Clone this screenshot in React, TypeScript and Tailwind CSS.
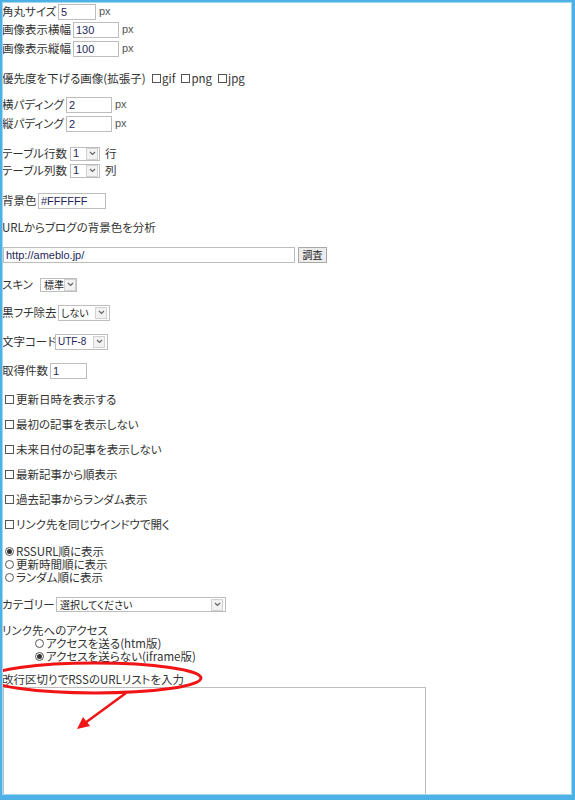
import React from "react";

const Box = () => (
  <span className="inline-block w-[9px] h-[9px] border border-[#555] bg-white shrink-0" />
);

const Radio = ({ checked = false }: { checked?: boolean }) => (
  <span className="inline-flex items-center justify-center w-[9px] h-[9px] rounded-full border border-[#555] bg-white shrink-0">
    {checked ? <span className="block w-[5px] h-[5px] rounded-full bg-[#333]" /> : null}
  </span>
);

const Chevron = () => (
  <span className="flex items-center justify-center w-[12px] h-[12px] border border-[#d2d2d2] bg-[#f2f2f2] shrink-0">
    <svg width="7" height="5" viewBox="0 0 7 5">
      <polyline points="1,1 3.5,3.5 6,1" fill="none" stroke="#666" strokeWidth="1.2" />
    </svg>
  </span>
);

const Row = ({ h, mt, children }: { h: string; mt?: string; children: React.ReactNode }) => (
  <div className={`flex items-center whitespace-nowrap ${h} ${mt ?? ""}`}>{children}</div>
);

const inputCls =
  "box-border h-[16px] border border-[#bdbdbd] bg-white px-[2px] text-[11px] leading-none text-[#1f1f5a] font-['Liberation_Sans',sans-serif] outline-none";

const Px = () => <span className="ml-[3px] text-[11px] text-[#555] font-['Liberation_Sans',sans-serif]">px</span>;

export default function App() {
  return (
    <div className="w-[575px] h-[800px] bg-[#4db1e5] pt-[2px] pl-[2px] pr-[3px] pb-[5px] box-border">
      <div className="relative w-full h-full border border-[#a3d7f2] bg-white overflow-hidden">
        <div className="ml-[-1px] text-[11.5px] leading-none text-[#333] font-['Noto_Sans_CJK_JP',sans-serif] [font-feature-settings:'palt']">
          <Row h="h-[17px]">
            <span className="w-[56px] shrink-0">角丸サイズ</span>
            <input readOnly value="5" className={`${inputCls} w-[38px]`} />
            <Px />
          </Row>
          <Row h="h-[19px]">
            <span className="w-[71px] shrink-0">画像表示横幅</span>
            <input readOnly value="130" className={`${inputCls} w-[46px]`} />
            <Px />
          </Row>
          <Row h="h-[19px]">
            <span className="w-[71px] shrink-0">画像表示縦幅</span>
            <input readOnly value="100" className={`${inputCls} w-[46px]`} />
            <Px />
          </Row>
          <Row h="h-[19px]" mt="mt-[11px]">
            <span className="w-[150px] shrink-0">優先度を下げる画像(拡張子)</span>
            <span className="flex items-center gap-[1px]"><Box /><span>gif</span></span>
            <span className="ml-[6px] flex items-center gap-[1px]"><Box /><span>png</span></span>
            <span className="ml-[6px] flex items-center gap-[1px]"><Box /><span>jpg</span></span>
          </Row>
          <Row h="h-[19px]" mt="mt-[7px]">
            <span className="w-[64px] shrink-0">横パディング</span>
            <input readOnly value="2" className={`${inputCls} w-[46px]`} />
            <Px />
          </Row>
          <Row h="h-[19px]">
            <span className="w-[64px] shrink-0">縦パディング</span>
            <input readOnly value="2" className={`${inputCls} w-[46px]`} />
            <Px />
          </Row>
          <Row h="h-[17px]" mt="mt-[12px]">
            <span className="w-[68px] shrink-0">テーブル行数</span>
            <span className="flex items-center justify-between w-[30px] h-[14px] border border-[#bdbdbd] pl-[2px] pr-[1px] box-border">
              <span className="text-[11px] text-[#1f1f5a] font-['Liberation_Sans',sans-serif]">1</span>
              <Chevron />
            </span>
            <span className="ml-[5px]">行</span>
          </Row>
          <Row h="h-[17px]">
            <span className="w-[68px] shrink-0">テーブル列数</span>
            <span className="flex items-center justify-between w-[30px] h-[14px] border border-[#bdbdbd] pl-[2px] pr-[1px] box-border">
              <span className="text-[11px] text-[#1f1f5a] font-['Liberation_Sans',sans-serif]">1</span>
              <Chevron />
            </span>
            <span className="ml-[5px]">列</span>
          </Row>
          <Row h="h-[19px]" mt="mt-[12px]">
            <span className="w-[36px] shrink-0">背景色</span>
            <input readOnly value="#FFFFFF" className={`${inputCls} w-[68px]`} />
          </Row>
          <Row h="h-[19px]" mt="mt-[8px]">
            <span>URLからブログの背景色を分析</span>
          </Row>
          <Row h="h-[19px]" mt="mt-[8px]">
            <input readOnly value="http://ameblo.jp/" className={`${inputCls} w-[292px] ml-[1px]`} />
            <span className="ml-[3px] flex items-center justify-center w-[29px] h-[16px] border border-[#a8a8a8] bg-[#ececec] text-[10px] text-[#222] box-border">調査</span>
          </Row>
          <Row h="h-[19px]" mt="mt-[11px]">
            <span className="w-[38px] shrink-0">スキン</span>
            <span className="flex items-center justify-between w-[37px] h-[14px] border border-[#bdbdbd] pl-[3px] pr-[1px] box-border">
              <span className="text-[10px] text-[#222]">標準</span>
              <Chevron />
            </span>
          </Row>
          <Row h="h-[19px]" mt="mt-[9px]">
            <span className="w-[56px] shrink-0">黒フチ除去</span>
            <span className="flex items-center justify-between w-[52px] h-[16px] border border-[#bdbdbd] pl-[2px] pr-[2px] box-border">
              <span className="text-[10px] text-[#222]">しない</span>
              <Chevron />
            </span>
          </Row>
          <Row h="h-[19px]" mt="mt-[10px]">
            <span className="w-[53px] shrink-0">文字コード</span>
            <span className="flex items-center justify-between w-[53px] h-[16px] border border-[#bdbdbd] pl-[2px] pr-[2px] box-border">
              <span className="text-[10px] text-[#1f1f5a] font-['Liberation_Sans',sans-serif]">UTF-8</span>
              <Chevron />
            </span>
          </Row>
          <Row h="h-[19px]" mt="mt-[10px]">
            <span className="w-[48px] shrink-0">取得件数</span>
            <input readOnly value="1" className={`${inputCls} w-[37px]`} />
          </Row>
          <div className="mt-[7px]">
            {[
              "更新日時を表示する",
              "最初の記事を表示しない",
              "未来日付の記事を表示しない",
              "最新記事から順表示",
              "過去記事からランダム表示",
              "リンク先を同じウインドウで開く",
            ].map((t) => (
              <Row key={t} h="h-[25px]">
                <span className="ml-[3px] mr-[2px] flex"><Box /></span>
                <span>{t}</span>
              </Row>
            ))}
          </div>
          <div className="mt-[8px]">
            <Row h="h-[13px]">
              <span className="ml-[3px] mr-[2px] flex"><Radio checked /></span>
              <span>RSSURL順に表示</span>
            </Row>
            <Row h="h-[13px]">
              <span className="ml-[3px] mr-[2px] flex"><Radio /></span>
              <span>更新時間順に表示</span>
            </Row>
            <Row h="h-[13px]">
              <span className="ml-[3px] mr-[2px] flex"><Radio /></span>
              <span>ランダム順に表示</span>
            </Row>
          </div>
          <Row h="h-[19px]" mt="mt-[11px]">
            <span className="w-[54px] shrink-0">カテゴリー</span>
            <span className="flex items-center justify-between w-[170px] h-[15px] border border-[#bdbdbd] pl-[3px] pr-[2px] box-border">
              <span className="text-[10px] text-[#222]">選択してください</span>
              <Chevron />
            </span>
          </Row>
          <Row h="h-[13px]" mt="mt-[10px]">
            <span>リンク先へのアクセス</span>
          </Row>
          <Row h="h-[13px]">
            <span className="ml-[33px] mr-[2px] flex"><Radio /></span>
            <span>アクセスを送る(htm版)</span>
          </Row>
          <Row h="h-[13px]">
            <span className="ml-[33px] mr-[2px] flex"><Radio checked /></span>
            <span>アクセスを送らない(iframe版)</span>
          </Row>
          <Row h="h-[14px]" mt="mt-[10px]">
            <span>改行区切りでRSSのURLリストを入力</span>
          </Row>
          <div className="ml-[1px] w-[423px] h-[130px] border border-[#bdbdbd] bg-white" />
        </div>
        <svg
          className="absolute left-0 top-0 pointer-events-none"
          width="568"
          height="791"
          viewBox="3 3 568 791"
        >
          <ellipse cx="95" cy="678" rx="106" ry="15" fill="none" stroke="#f01414" strokeWidth="3" />
          <line x1="126" y1="693" x2="85" y2="723" stroke="#f01414" strokeWidth="2.5" />
          <polygon points="77,729 90,726 83,717" fill="#f01414" />
        </svg>
      </div>
    </div>
  );
}
